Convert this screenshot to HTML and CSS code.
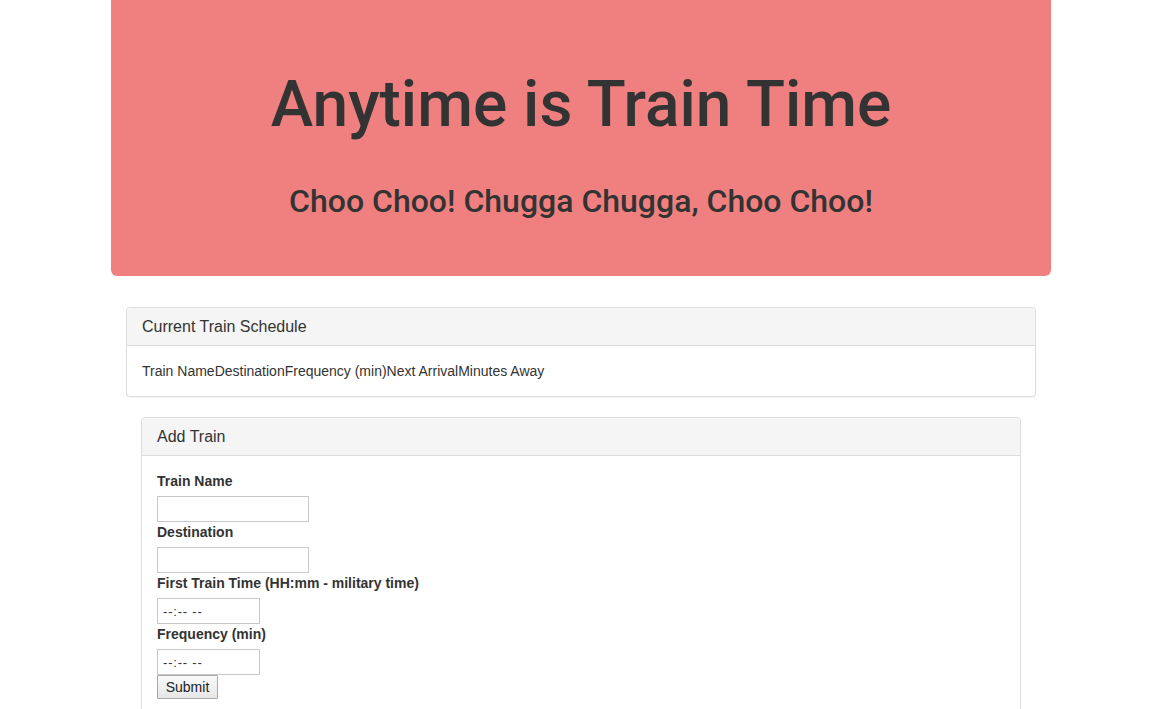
FILE: index.html
```html
<!DOCTYPE html>
<html lang="en">
<head>
<meta charset="utf-8">
<title>Anytime is Train Time</title>
<link rel="stylesheet" href="styles.css">
</head>
<body>
<div class="container">
  <div class="jumbotron">
    <h1 class="title">Anytime is Train Time</h1>
    <h2 class="subtitle">Choo Choo! Chugga Chugga, Choo Choo!</h2>
  </div>
  <div class="row">
    <div class="panel">
      <div class="panel-heading">Current Train Schedule</div>
      <div class="panel-body">
        <div class="schedule-head"><span>Train Name</span><span>Destination</span><span>Frequency (min)</span><span>Next Arrival</span><span>Minutes Away</span></div>
      </div>
    </div>
    <div class="row">
      <div class="panel panel-form">
        <div class="panel-heading">Add Train</div>
        <div class="panel-body">
          <form class="train-form">
            <label class="field-label">Train Name</label>
            <input class="field text-field" type="text">
            <label class="field-label">Destination</label>
            <input class="field text-field" type="text">
            <label class="field-label">First Train Time (HH:mm - military time)</label>
            <input class="field time-field" type="text" placeholder="--:-- --">
            <label class="field-label">Frequency (min)</label>
            <input class="field time-field" type="text" placeholder="--:-- --">
            <button class="submit-btn" type="button">Submit</button>
          </form>
        </div>
      </div>
    </div>
  </div>
</div>
</body>
</html>
```
FILE: styles.css
```css
* { box-sizing: border-box; }
html, body {
  margin: 0;
  padding: 0;
  background: #fff;
  height: 100%;
  overflow: hidden;
}
body {
  font-family: "Liberation Sans", Arial, sans-serif;
  font-size: 14px;
  line-height: 20px;
  color: #333;
}
.container {
  width: 940px;
  margin-left: 111px;
}
.jumbotron {
  background: #f08080;
  border-radius: 0 0 6px 6px;
  padding: 70px 60px 48px;
  text-align: center;
  margin-bottom: 31px;
}
.title {
  margin: 0;
  font-family: Roboto, "Liberation Sans", Arial, sans-serif;
  font-size: 64px;
  line-height: 69px;
  font-weight: 500;
}
.subtitle {
  margin: 45px 0 10px;
  font-family: Roboto, "Liberation Sans", Arial, sans-serif;
  font-size: 32px;
  line-height: 34px;
  font-weight: 500;
}
.row {
  padding: 0 15px;
}
.panel {
  border: 1px solid #ddd;
  border-radius: 4px;
  background: #fff;
  box-shadow: 0 1px 1px rgba(0,0,0,0.05);
  margin-bottom: 20px;
}
.panel-heading {
  background: #f5f5f5;
  border-bottom: 1px solid #ddd;
  border-radius: 3px 3px 0 0;
  padding: 10px 15px;
  font-size: 16px;
  line-height: 17px;
  height: 38px;
}
.panel-body {
  padding: 15px;
}
.panel-form {
  height: 400px;
}
.train-form {
  display: flex;
  flex-direction: column;
  align-items: flex-start;
}
.field-label {
  font-weight: bold;
  line-height: 20px;
  margin-bottom: 5px;
}
.field {
  height: 26px;
  border: 1px solid #c8c8c8;
  border-radius: 0;
  padding: 2px 5px;
  font-family: "Liberation Sans", Arial, sans-serif;
  font-size: 13px;
  color: #333;
  background: #fff;
  margin: 0;
}
.text-field { width: 152px; }
.time-field { width: 103px; }
.time-field::placeholder {
  color: #333;
  opacity: 1;
  letter-spacing: 0.8px;
}
.submit-btn {
  height: 24px;
  width: 61px;
  margin: 0;
  padding: 0;
  font-family: "Liberation Sans", Arial, sans-serif;
  font-size: 14px;
  color: #222;
  border: 1px solid #a9a9a9;
  border-radius: 1px;
  background: linear-gradient(#fafafa, #e6e6e6);
}
```
